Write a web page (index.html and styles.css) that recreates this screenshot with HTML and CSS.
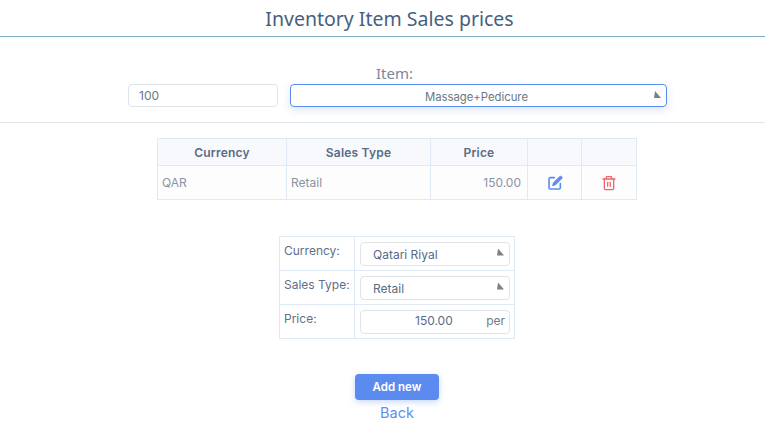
FILE: index.html

```html
<!DOCTYPE html>
<html lang="en">
<head>
  <meta charset="UTF-8" />
  <meta name="viewport" content="width=device-width, initial-scale=1.0"/>
  <title>Inventory Item Sales prices</title>
  <link rel="stylesheet" href="styles.css">
</head>
<body>
  <h1 class="page-title">Inventory Item Sales prices</h1>

  <div class="item-picker">
    <div class="item-label">Item:</div>
    <div class="item-row">
      <div class="field item-code">100</div>
      <div class="field item-select">Massage+Pedicure<span class="arrow"></span></div>
    </div>
  </div>

  <table class="prices">
    <thead>
      <tr>
        <th class="col-currency">Currency</th>
        <th class="col-type">Sales Type</th>
        <th class="col-price">Price</th>
        <th class="col-edit"></th>
        <th class="col-delete"></th>
      </tr>
    </thead>
    <tbody>
      <tr>
        <td>QAR</td>
        <td>Retail</td>
        <td class="num">150.00</td>
        <td class="action">
          <svg class="icon edit" viewBox="0 0 24 24" fill="none" stroke="currentColor" stroke-width="2.4" stroke-linecap="round" stroke-linejoin="round">
            <path d="M11 4H5a2 2 0 0 0-2 2v13a2 2 0 0 0 2 2h13a2 2 0 0 0 2-2v-6"/>
            <path d="M19 2.5a2.1 2.1 0 0 1 3 3L12.5 15l-4 1 1-4z" fill="currentColor" stroke-width="1.4"/>
          </svg>
        </td>
        <td class="action">
          <svg class="icon trash" viewBox="0 0 24 24" fill="none" stroke="currentColor" stroke-width="2" stroke-linecap="round" stroke-linejoin="round">
            <path d="M3 6h18"/>
            <path d="M8 6V3.5a1 1 0 0 1 1-1h6a1 1 0 0 1 1 1V6"/>
            <path d="M5 6v14a2 2 0 0 0 2 2h10a2 2 0 0 0 2-2V6"/>
            <path d="M10 11v6"/>
            <path d="M14 11v6"/>
          </svg>
        </td>
      </tr>
    </tbody>
  </table>

  <table class="edit-form">
    <tr>
      <td class="form-label">Currency:</td>
      <td class="form-input"><div class="field form-select">Qatari Riyal<span class="arrow"></span></div></td>
    </tr>
    <tr>
      <td class="form-label">Sales Type:</td>
      <td class="form-input"><div class="field form-select">Retail<span class="arrow"></span></div></td>
    </tr>
    <tr>
      <td class="form-label">Price:</td>
      <td class="form-input"><div class="field price-input"><span class="price-value">150.00</span><span class="per">per</span></div></td>
    </tr>
  </table>

  <div class="actions">
    <button class="btn-add" type="button">Add new</button>
    <a class="back" href="#">Back</a>
  </div>
</body>
</html>
```

FILE: styles.css

```css
body {
  margin: 0;
  background: #fff;
  font-family: Inter, "Noto Sans", sans-serif;
  color: #56657f;
  font-size: 12px;
}
.page-title {
  margin: 0;
  height: 36px;
  line-height: 37px;
  padding-left: 14px;
  text-align: center;
  font-family: "Noto Sans", sans-serif;
  font-size: 19.5px;
  font-weight: 400;
  color: #47607f;
  border-bottom: 1px solid #7fadc9;
}
.item-picker {
  height: 86px;
  border-bottom: 1px solid #e2e5ea;
  padding-left: 128px;
  box-sizing: border-box;
}
.item-label {
  padding-top: 27px;
  padding-left: 248px;
  height: 20px;
  line-height: 19px;
  font-family: "Noto Sans", sans-serif;
  font-size: 15px;
  color: #7d8798;
}
.item-row {
  display: flex;
  gap: 12px;
}
.field {
  position: relative;
  box-sizing: border-box;
  background: #fff;
  border: 1px solid #dfe3ea;
  border-radius: 4px;
}
.item-code {
  width: 150px;
  height: 23px;
  line-height: 22px;
  padding-left: 10px;
  color: #6a7688;
}
.item-select {
  width: 377px;
  height: 23px;
  line-height: 24px;
  padding-right: 4px;
  text-align: center;
  font-size: 11.3px;
  color: #6a7688;
  border-color: #5b8def;
  box-shadow: 0 3px 8px rgba(70, 110, 200, 0.18);
}
.arrow {
  position: absolute;
  right: 5px;
  top: 6px;
  width: 7px;
  height: 7px;
  background: #7f7f7f;
  clip-path: polygon(15% 0, 100% 100%, 0 100%);
}
.prices {
  margin: 15px 0 0 157px;
  width: 479px;
  border-collapse: collapse;
  table-layout: fixed;
  background: #fdfdfe;
}
.prices th, .prices td {
  box-sizing: border-box;
  border: 1px solid #e0eaf6;
  padding: 0 4px;
}
.prices th {
  height: 27px;
  background: #f8f9fd;
  font-weight: 600;
  letter-spacing: 0.2px;
  color: #5a6b84;
}
.prices td {
  height: 34px;
  color: #8a93a1;
}
.col-currency { width: 129px; }
.col-type { width: 144px; }
.col-price { width: 97px; }
.col-edit { width: 54px; }
.col-delete { width: 55px; }
.prices td.num {
  text-align: right;
  padding-right: 6px;
}
.prices td.action {
  text-align: center;
  padding: 0;
}
.icon {
  width: 16px;
  height: 16px;
  display: block;
  margin: 1px auto 0;
}
.edit { color: #5b8def; }
.trash { color: #f4646a; }
.edit-form {
  margin: 36px 0 0 279px;
  width: 236px;
  border-collapse: collapse;
  table-layout: fixed;
}
.edit-form td {
  border: 1px solid #e0eaf6;
  height: 34px;
  box-sizing: border-box;
}
.form-label {
  width: 75px;
  padding: 0 0 6px 4px;
  color: #5f6f88;
}
.form-input {
  padding: 0 4px 0 5px;
}
.form-select {
  height: 24px;
  line-height: 23px;
  padding-left: 12px;
  color: #5a6a84;
}
.form-select .arrow {
  right: 5px;
  top: 6px;
}
.price-input {
  display: flex;
  justify-content: space-between;
  height: 24px;
  line-height: 20px;
  padding-left: 54px;
  padding-right: 4px;
}
.price-value { color: #5a6a84; }
.per { color: #6f7a8c; }
.actions {
  margin-top: 35px;
  display: flex;
  flex-direction: column;
  align-items: center;
  padding-left: 29px;
}
.btn-add {
  width: 84px;
  height: 26px;
  border: 0;
  border-radius: 4px;
  background: #5b8bee;
  color: #fff;
  font-family: inherit;
  font-size: 11.5px;
  font-weight: 600;
  box-shadow: 0 2px 6px rgba(91, 139, 238, 0.35);
}
.back {
  margin-top: 3px;
  font-size: 14.5px;
  line-height: 20px;
  color: #5f90ee;
  text-decoration: none;
}
```
